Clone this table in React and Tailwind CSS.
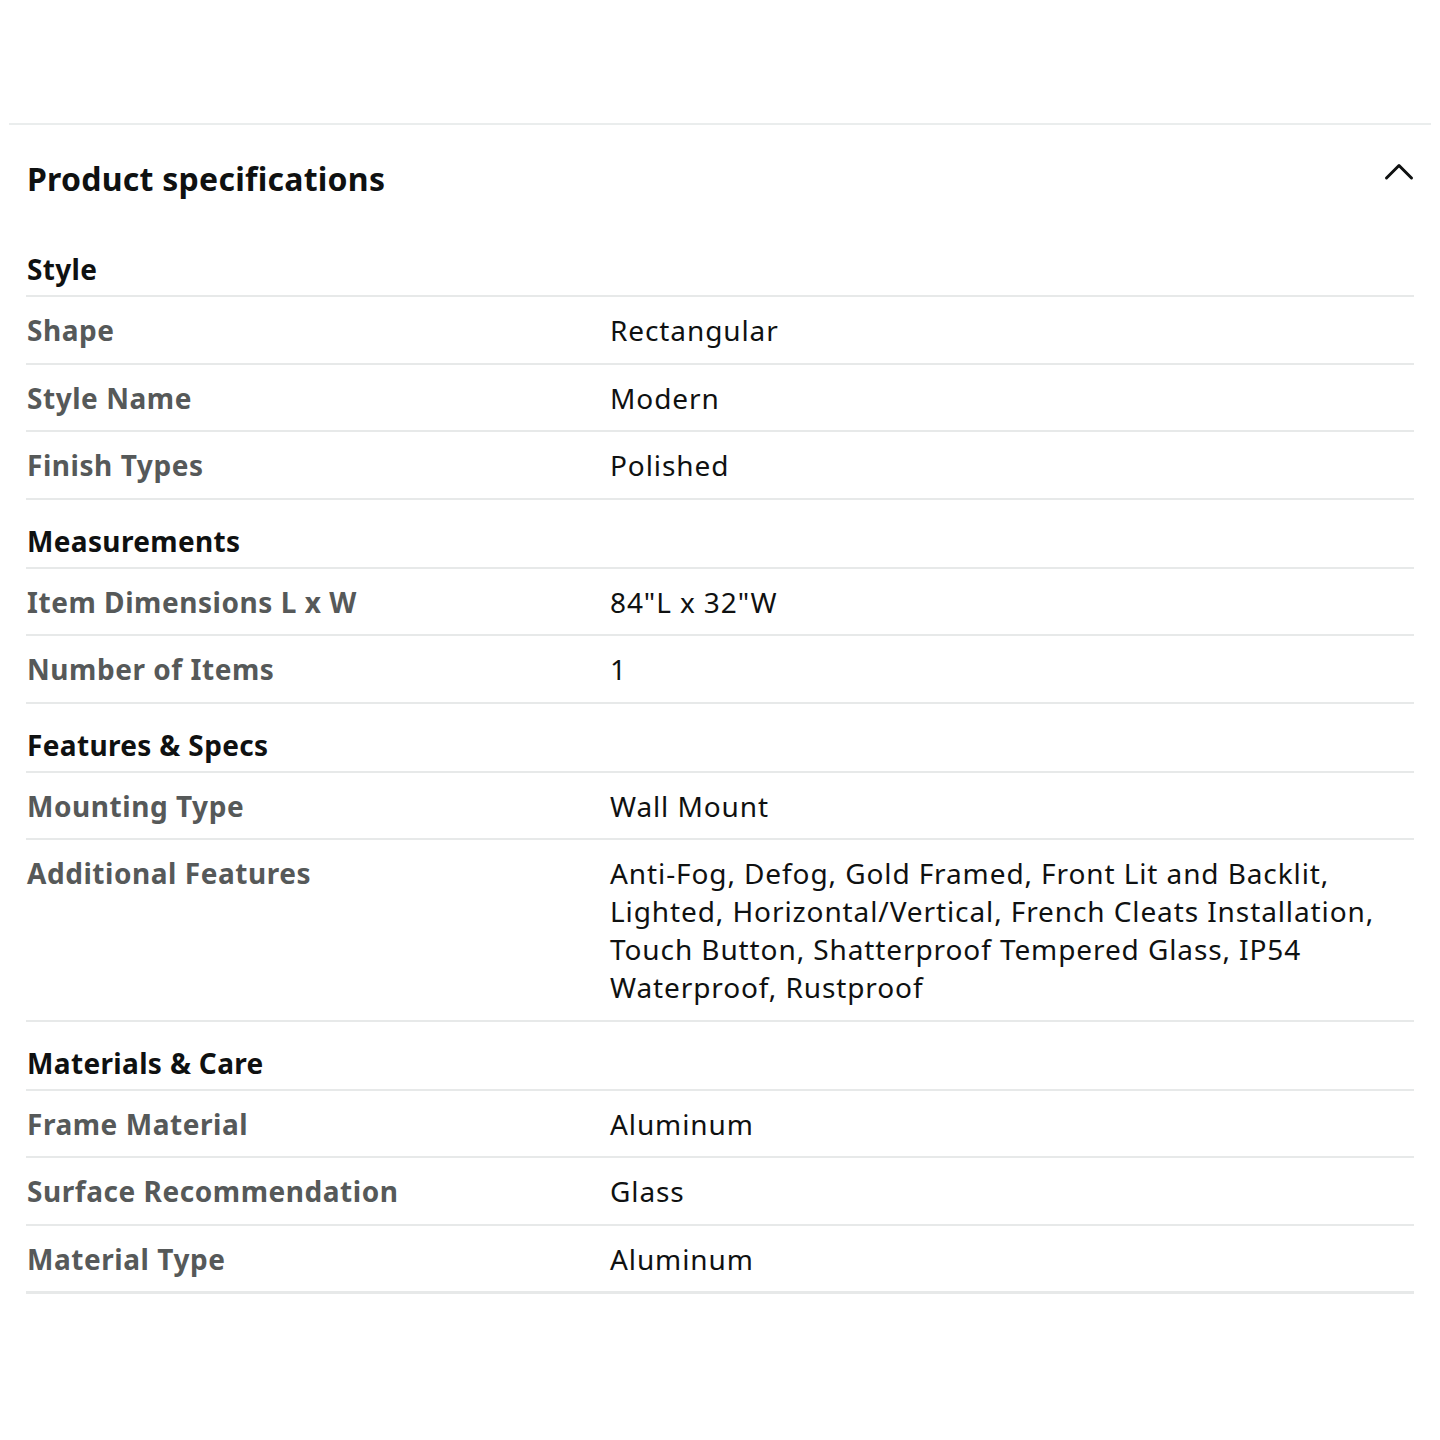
import React from 'react';

const sections = [
  {
    title: 'Style',
    rows: [
      ['Shape', 'Rectangular'],
      ['Style Name', 'Modern'],
      ['Finish Types', 'Polished'],
    ],
  },
  {
    title: 'Measurements',
    rows: [
      ['Item Dimensions L x W', '84"L x 32"W'],
      ['Number of Items', '1'],
    ],
  },
  {
    title: 'Features & Specs',
    rows: [
      ['Mounting Type', 'Wall Mount'],
      [
        'Additional Features',
        'Anti-Fog, Defog, Gold Framed, Front Lit and Backlit, Lighted, Horizontal/Vertical, French Cleats Installation, Touch Button, Shatterproof Tempered Glass, IP54 Waterproof, Rustproof',
      ],
    ],
  },
  {
    title: 'Materials & Care',
    rows: [
      ['Frame Material', 'Aluminum'],
      ['Surface Recommendation', 'Glass'],
      ['Material Type', 'Aluminum'],
    ],
  },
];

function ChevronUp() {
  return (
    <svg width="32" height="22" viewBox="0 0 32 22" fill="none">
      <path d="M3.5 17 L16 4.5 L28.5 17" stroke="#0f1111" strokeWidth="3" strokeLinecap="round" strokeLinejoin="round" />
    </svg>
  );
}

export default function App() {
  return (
    <div
      className="w-[1440px] h-[1440px] bg-white text-[#0f1111]"
      style={{ fontFamily: '"Noto Sans", "Open Sans", sans-serif' }}
    >
      <div className="pt-[123px] px-[9px]">
        <div className="border-t-2 border-[#eaeded]" />
      </div>

      <div className="px-[26px]">
        {/* Header */}
        <div className="flex items-center justify-between h-[103px] pt-[5px]">
          <h2 className="text-[32px] font-bold leading-none pl-[1px] tracking-[0.25px]">Product specifications</h2>
          <div className="-mr-[1px] -mt-[15px]">
            <ChevronUp />
          </div>
        </div>

        {sections.map((section) => (
          <div key={section.title}>
            <div className="pt-[22px] pb-[7px] text-[28px] leading-[38px] font-bold tracking-[0.35px] border-b-2 border-[#e7e9e9] pl-[1px]">
              {section.title}
            </div>
            {section.rows.map(([label, value]) => (
              <div
                key={label}
                className="grid grid-cols-[583px_1fr] pt-[14px] pb-[13.5px] text-[28px] leading-[38px] border-b-2 border-[#e7e9e9] pl-[1px]"
              >
                <div className="font-bold text-[#565959] tracking-[0.55px]">{label}</div>
                <div className="tracking-[0.9px]">{value}</div>
              </div>
            ))}
          </div>
        ))}
        <div className="border-t border-[#e7e9e9]" />
      </div>
    </div>
  );
}
